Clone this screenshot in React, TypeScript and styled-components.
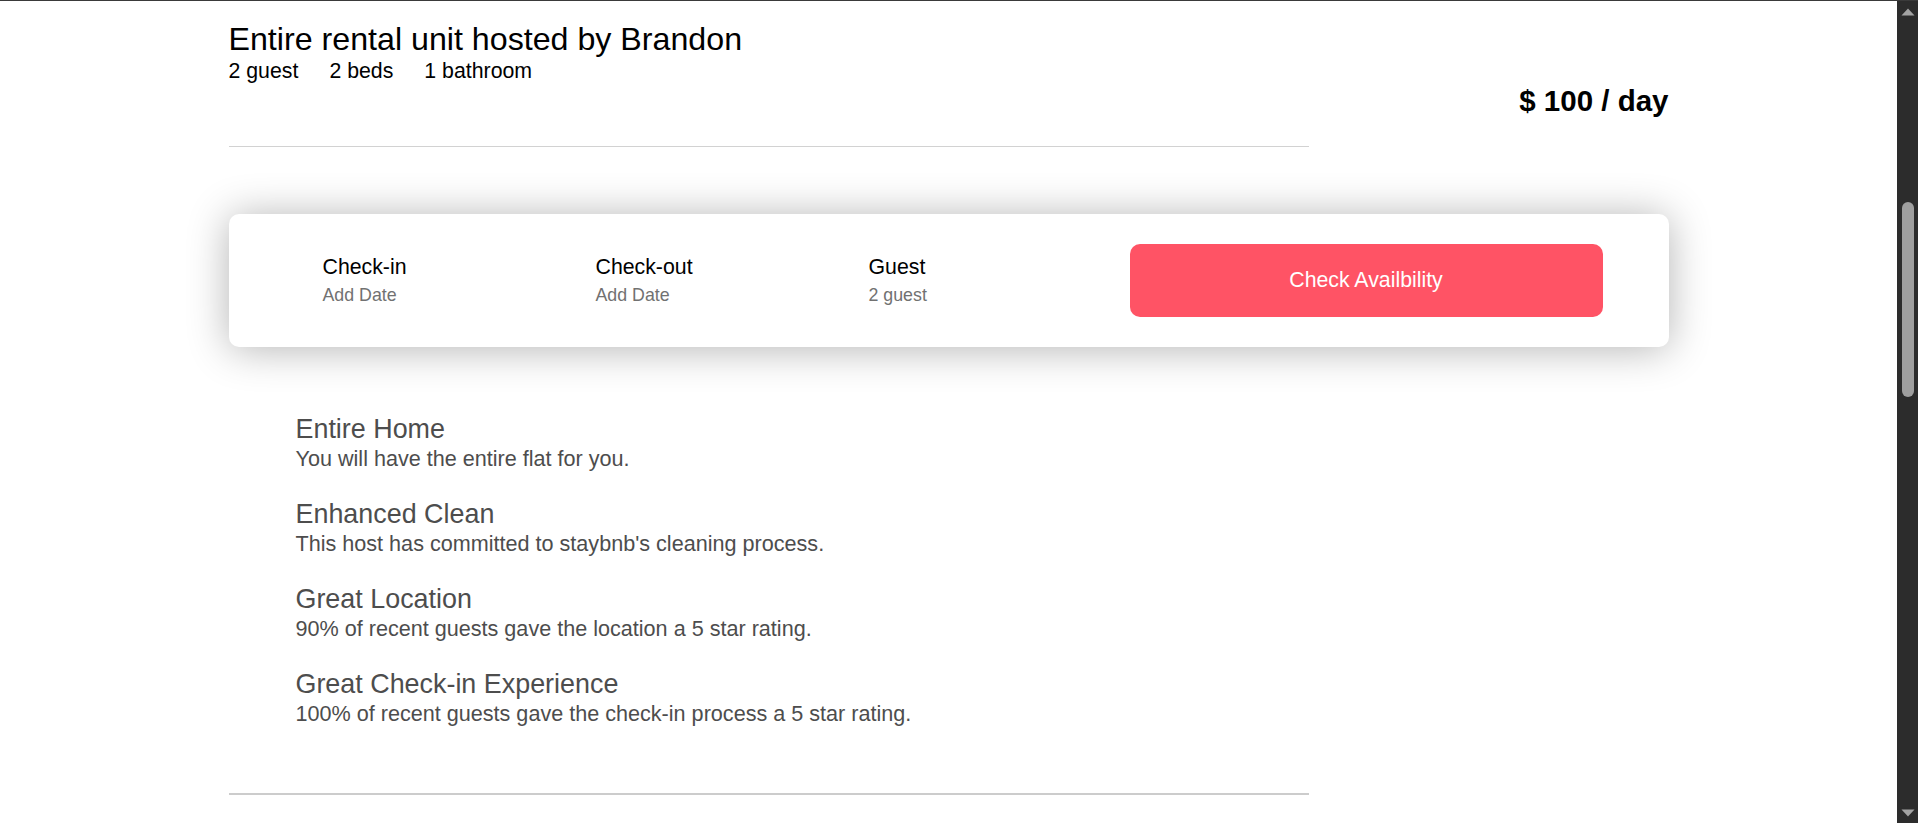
import React from "react";
import styled, { createGlobalStyle } from "styled-components";

const GlobalStyle = createGlobalStyle`
  html, body {
    margin: 0;
    padding: 0;
    background: #ffffff;
  }
  body {
    font-family: "Liberation Sans", Arial, Helvetica, sans-serif;
    color: #000000;
  }
`;

const Shell = styled.div`
  display: grid;
  grid-template-columns: minmax(0, 1fr) 21px;
  height: 100vh;
  overflow: hidden;
  border-top: 1px solid #3a3a3a;
  box-sizing: border-box;
`;

const Page = styled.div`
  padding-top: 20px;
  min-width: 0;
`;

const Container = styled.main`
  max-width: 1440px;
  margin: 0 auto;
`;

const Header = styled.section`
  display: grid;
  grid-template-columns: 3fr 1fr;
`;

const HeaderMain = styled.div`
  display: flex;
  flex-direction: column;
`;

const Title = styled.h1`
  margin: 0;
  font-size: 32.2px;
  font-weight: 400;
  line-height: normal;
  color: #000000;
`;

const Specs = styled.div`
  display: flex;
  gap: 31px;
  margin-top: 1px;
  font-size: 21.3px;
  line-height: normal;
`;

const Spec = styled.span``;

const Divider = styled.hr<{ $thick?: boolean }>`
  margin: ${(p) => (p.$thick ? "0" : "62px 0 0")};
  border: 0;
  border-top: ${(p) => (p.$thick ? "2px solid #cccccc" : "1px solid #d2d2d2")};
  width: ${(p) => (p.$thick ? "75%" : "100%")};
`;

const Price = styled.div`
  padding-top: 63px;
  text-align: right;
  font-size: 29.5px;
  font-weight: 700;
  line-height: normal;
`;

const BookingCard = styled.section`
  margin-top: 67px;
  display: grid;
  grid-template-columns: 273px 273px 1fr 473px;
  align-items: center;
  padding: 30px 66px 30px 94px;
  background: #ffffff;
  border-radius: 10px;
  box-shadow: 0 2px 42px rgba(0, 0, 0, 0.3);
`;

const Field = styled.div`
  display: flex;
  flex-direction: column;
`;

const FieldLabel = styled.span`
  font-size: 21.3px;
  line-height: normal;
  color: #000000;
`;

const FieldValue = styled.span`
  margin-top: 4.7px;
  font-size: 17.8px;
  line-height: normal;
  color: #717171;
`;

const CheckButton = styled.button`
  height: 73px;
  border: 0;
  border-radius: 10px;
  background: #ff5365;
  color: #ffffff;
  font-family: "Liberation Sans", Arial, Helvetica, sans-serif;
  font-size: 21.3px;
  cursor: pointer;
`;

const Features = styled.section`
  display: flex;
  flex-direction: column;
  gap: 27.5px;
  padding: 67px 67px 66px;
`;

const Feature = styled.div`
  display: flex;
  flex-direction: column;
  color: #4d4d4d;
`;

const FeatureTitle = styled.h3`
  margin: 0;
  font-size: 26.9px;
  font-weight: 400;
  line-height: normal;
`;

const FeatureText = styled.p`
  margin: 0.5px 0 0;
  font-size: 21.6px;
  line-height: normal;
`;

/* Browser scrollbar (drawn, since the page is shown scrolled) */
const ScrollRail = styled.aside`
  display: flex;
  flex-direction: column;
  background: #2c2c2c;
`;

const RailArrow = styled.div`
  height: 21px;
  display: flex;
  align-items: center;
  justify-content: center;
  flex: 0 0 auto;
`;

const RailTrack = styled.div`
  flex: 1;
  padding: 180px 4px 0 5px;
`;

const RailThumb = styled.div`
  height: 195px;
  border-radius: 6px;
  background: #9f9f9f;
`;

const features = [
  { title: "Entire Home", text: "You will have the entire flat for you." },
  { title: "Enhanced Clean", text: "This host has committed to staybnb's cleaning process." },
  { title: "Great Location", text: "90% of recent guests gave the location a 5 star rating." },
  {
    title: "Great Check-in Experience",
    text: "100% of recent guests gave the check-in process a 5 star rating.",
  },
];

const fields = [
  { label: "Check-in", value: "Add Date" },
  { label: "Check-out", value: "Add Date" },
  { label: "Guest", value: "2 guest" },
];

export default function App() {
  return (
    <>
      <GlobalStyle />
      <Shell>
        <Page>
          <Container>
            <Header>
              <HeaderMain>
                <Title>Entire rental unit hosted by Brandon</Title>
                <Specs>
                  <Spec>2 guest</Spec>
                  <Spec>2 beds</Spec>
                  <Spec>1 bathroom</Spec>
                </Specs>
                <Divider />
              </HeaderMain>
              <Price>$ 100 / day</Price>
            </Header>

            <BookingCard>
              {fields.map((f) => (
                <Field key={f.label}>
                  <FieldLabel>{f.label}</FieldLabel>
                  <FieldValue>{f.value}</FieldValue>
                </Field>
              ))}
              <CheckButton type="button">Check Availbility</CheckButton>
            </BookingCard>

            <Features>
              {features.map((f) => (
                <Feature key={f.title}>
                  <FeatureTitle>{f.title}</FeatureTitle>
                  <FeatureText>{f.text}</FeatureText>
                </Feature>
              ))}
            </Features>
            <Divider $thick />
          </Container>
        </Page>

        <ScrollRail aria-hidden="true">
          <RailArrow>
            <svg width="14" height="8" viewBox="0 0 14 8">
              <path d="M7 0.5 L13.5 7.5 L0.5 7.5 Z" fill="#a3a3a3" />
            </svg>
          </RailArrow>
          <RailTrack>
            <RailThumb />
          </RailTrack>
          <RailArrow>
            <svg width="14" height="8" viewBox="0 0 14 8">
              <path d="M0.5 0.5 L13.5 0.5 L7 7.5 Z" fill="#a3a3a3" />
            </svg>
          </RailArrow>
        </ScrollRail>
      </Shell>
    </>
  );
}
